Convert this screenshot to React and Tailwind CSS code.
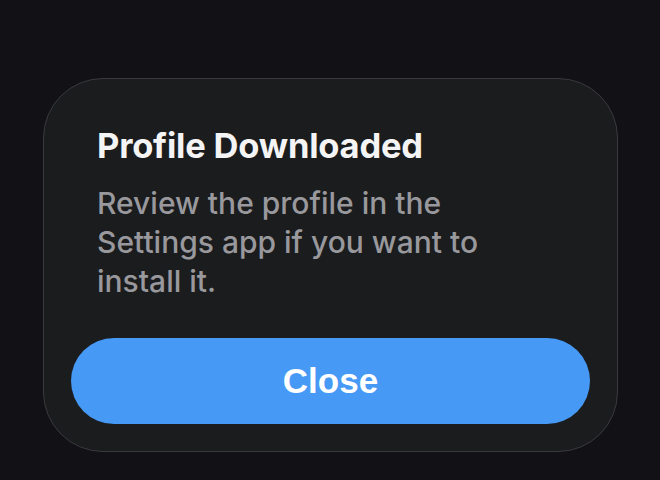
export default function App() {
  return (
    <div className="w-[660px] h-[480px] bg-[#121216] overflow-hidden pt-[78px] pl-[43px]">
      <div className="w-[575px] h-[374px] rounded-[60px] border border-[#3a3a3e] bg-[#1b1c1e] flex flex-col px-[27px] pb-[27px]">
        <div className="px-[26px] pt-[47px]" style={{ fontFamily: 'Inter, "Liberation Sans", sans-serif' }}>
          <div className="text-[34.5px] leading-[40px] font-bold text-[#f4f4f5] tracking-[-0.2px]">Profile Downloaded</div>
          <div className="mt-[18px] text-[30px] leading-[39px] font-[450] text-[#98989d] w-[420px]">
            Review the profile in the Settings app if you want to install it.
          </div>
        </div>
        <div className="mt-auto h-[86px] rounded-full bg-[#4799f6] flex items-center justify-center">
          <span className="text-[35px] font-bold text-white" style={{ fontFamily: '"Liberation Sans", Arial, sans-serif' }}>Close</span>
        </div>
      </div>
    </div>
  );
}
